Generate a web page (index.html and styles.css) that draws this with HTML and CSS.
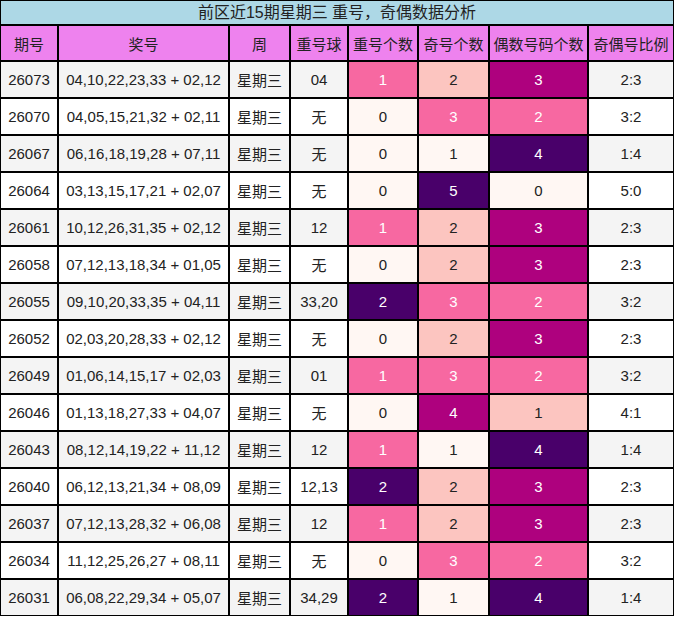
FILE: index.html
```html
<!DOCTYPE html>
<html lang="zh-CN">
<head>
<meta charset="utf-8">
<title>前区近15期星期三 重号，奇偶数据分析</title>
<link rel="stylesheet" href="styles.css">
</head>
<body>
<table class="stats">
  <colgroup>
    <col class="w-issue"><col class="w-nums"><col class="w-week"><col class="w-rep">
    <col class="w-repc"><col class="w-odd"><col class="w-even"><col class="w-ratio">
  </colgroup>
  <thead>
    <tr class="title-row"><th colspan="8">前区近15期星期三 重号，奇偶数据分析</th></tr>
    <tr class="head-row">
      <th>期号</th><th>奖号</th><th>周</th><th>重号球</th><th>重号个数</th><th>奇号个数</th><th>偶数号码个数</th><th>奇偶号比例</th>
    </tr>
  </thead>
  <tbody>
    <tr><td>26073</td><td>04,10,22,23,33 + 02,12</td><td>星期三</td><td>04</td><td class="l2">1</td><td class="l1">2</td><td class="l3">3</td><td>2:3</td></tr>
    <tr><td>26070</td><td>04,05,15,21,32 + 02,11</td><td>星期三</td><td>无</td><td class="l0">0</td><td class="l2">3</td><td class="l2">2</td><td>3:2</td></tr>
    <tr><td>26067</td><td>06,16,18,19,28 + 07,11</td><td>星期三</td><td>无</td><td class="l0">0</td><td class="l0">1</td><td class="l4">4</td><td>1:4</td></tr>
    <tr><td>26064</td><td>03,13,15,17,21 + 02,07</td><td>星期三</td><td>无</td><td class="l0">0</td><td class="l4">5</td><td class="l0">0</td><td>5:0</td></tr>
    <tr><td>26061</td><td>10,12,26,31,35 + 02,12</td><td>星期三</td><td>12</td><td class="l2">1</td><td class="l1">2</td><td class="l3">3</td><td>2:3</td></tr>
    <tr><td>26058</td><td>07,12,13,18,34 + 01,05</td><td>星期三</td><td>无</td><td class="l0">0</td><td class="l1">2</td><td class="l3">3</td><td>2:3</td></tr>
    <tr><td>26055</td><td>09,10,20,33,35 + 04,11</td><td>星期三</td><td>33,20</td><td class="l4">2</td><td class="l2">3</td><td class="l2">2</td><td>3:2</td></tr>
    <tr><td>26052</td><td>02,03,20,28,33 + 02,12</td><td>星期三</td><td>无</td><td class="l0">0</td><td class="l1">2</td><td class="l3">3</td><td>2:3</td></tr>
    <tr><td>26049</td><td>01,06,14,15,17 + 02,03</td><td>星期三</td><td>01</td><td class="l2">1</td><td class="l2">3</td><td class="l2">2</td><td>3:2</td></tr>
    <tr><td>26046</td><td>01,13,18,27,33 + 04,07</td><td>星期三</td><td>无</td><td class="l0">0</td><td class="l3">4</td><td class="l1">1</td><td>4:1</td></tr>
    <tr><td>26043</td><td>08,12,14,19,22 + 11,12</td><td>星期三</td><td>12</td><td class="l2">1</td><td class="l0">1</td><td class="l4">4</td><td>1:4</td></tr>
    <tr><td>26040</td><td>06,12,13,21,34 + 08,09</td><td>星期三</td><td>12,13</td><td class="l4">2</td><td class="l1">2</td><td class="l3">3</td><td>2:3</td></tr>
    <tr><td>26037</td><td>07,12,13,28,32 + 06,08</td><td>星期三</td><td>12</td><td class="l2">1</td><td class="l1">2</td><td class="l3">3</td><td>2:3</td></tr>
    <tr><td>26034</td><td>11,12,25,26,27 + 08,11</td><td>星期三</td><td>无</td><td class="l0">0</td><td class="l2">3</td><td class="l2">2</td><td>3:2</td></tr>
    <tr><td>26031</td><td>06,08,22,29,34 + 05,07</td><td>星期三</td><td>34,29</td><td class="l4">2</td><td class="l0">1</td><td class="l4">4</td><td>1:4</td></tr>
  </tbody>
</table>
</body>
</html>
```
FILE: styles.css
```css
html, body {
  margin: 0;
  padding: 0;
  background: #ffffff;
}

.stats {
  width: 674px;
  table-layout: fixed;
  border-collapse: separate;
  border-spacing: 0;
  font-family: "Liberation Sans", "Noto Sans CJK SC", sans-serif;
  font-size: 15px;
  color: #222222;
}

.stats th,
.stats td {
  box-sizing: border-box;
  border: 1px solid #000000;
  padding: 0;
  text-align: center;
  vertical-align: middle;
  font-weight: normal;
  white-space: nowrap;
}

.w-issue { width: 58px; }
.w-nums { width: 171px; }
.w-week { width: 61px; }
.w-rep { width: 58px; }
.w-repc { width: 70px; }
.w-odd { width: 71px; }
.w-even { width: 99px; }
.w-ratio { width: 86px; }

.title-row th {
  height: 25px;
  background: #add8e6;
  font-size: 16px;
  line-height: 22px;
}

.head-row th {
  height: 36px;
  background: #ee82ee;
}

.stats tbody td {
  height: 37px;
  background: #ffffff;
}

.stats tbody tr:nth-child(odd) td {
  background: #f4f4f4;
}

.stats tbody tr td.l0 { background: #fff7f3; color: #222222; }
.stats tbody tr td.l1 { background: #fcc5c0; color: #222222; }
.stats tbody tr td.l2 { background: #f768a1; color: #ffffff; }
.stats tbody tr td.l3 { background: #ae017e; color: #ffffff; }
.stats tbody tr td.l4 { background: #49006a; color: #ffffff; }
```
